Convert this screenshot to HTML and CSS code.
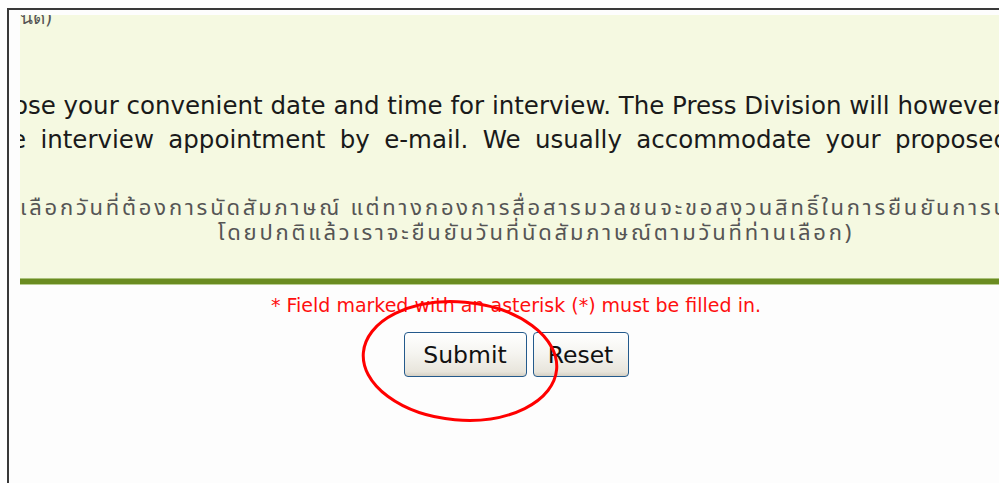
FILE: index.html
```html
<!DOCTYPE html>
<html lang="en">
<head>
<meta charset="utf-8">
<title>Interview request</title>
<link rel="stylesheet" href="styles.css">
</head>
<body>
<div class="frame">
  <div class="panel">
    <div class="panel-body">
      <p class="cut-top">นัด)</p>
      <div class="en">
        <div class="en-line en-first">ose your convenient date and time for interview. The Press Division will however reserve</div>
        <div class="en-line en-second">e interview appointment by e-mail. We usually accommodate your proposed</div>
      </div>
      <div class="th">
        <div class="th-line">(กรุณาเลือกวันที่ต้องการนัดสัมภาษณ์ แต่ทางกองการสื่อสารมวลชนจะขอสงวนสิทธิ์ในการยืนยันการนัดสัมภาษณ์</div>
        <div class="th-line">โดยปกติแล้วเราจะยืนยันวันที่นัดสัมภาษณ์ตามวันที่ท่านเลือก)</div>
      </div>
    </div>
    <div class="rule"></div>
  </div>
  <form class="actions" onsubmit="return false">
    <p class="note">* Field marked with an asterisk (*) must be filled in.</p>
    <div class="buttons">
      <button type="submit" class="btn btn-submit">Submit</button>
      <button type="reset" class="btn btn-reset">Reset</button>
    </div>
  </form>
  <svg class="circle-mark" width="240" height="140" viewBox="0 0 240 140" aria-hidden="true">
    <ellipse cx="110" cy="71" rx="97" ry="59" transform="rotate(5 110 71)" fill="none" stroke="#ff0000" stroke-width="3"/>
  </svg>
</div>
</body>
</html>
```

FILE: styles.css
```css
html, body {
  height: 100%;
}

body {
  margin: 8px 0 0 7px;
  overflow: hidden;
  background: #ffffff;
  font-family: "DejaVu Sans", Tahoma, sans-serif;
}

/* outer window frame, only top and left edges show */
.frame {
  position: relative;
  width: calc(100% + 30px);
  height: 100%;
  border-top: 2px solid #3a3a3a;
  border-left: 2px solid #3a3a3a;
  box-sizing: border-box;
  background: #fdfdfd;
}

/* pale green information panel */
.panel {
  margin: 5px 0 0 11px;
  background: #f5f9e1;
  overflow: hidden;
}

.panel-body {
  height: 263px;
  overflow: hidden;
}

.cut-top {
  margin: -11px 0 0 0;
  font-size: 19px;
  line-height: 26px;
  color: #555555;
}

.en {
  margin-top: 59px;
  color: #1a1a1a;
  font-size: 24.5px;
  line-height: 34px;
}

.en-line {
  white-space: nowrap;
}

.en-first {
  margin-left: -7px;
}

.en-second {
  width: 998px;
  margin-left: -9px;
  white-space: normal;
  text-align: justify;
  text-align-last: justify;
}

/* Thai lines are centred in a block wider than the panel */
.th {
  width: 2000px;
  margin: 39px 0 0 -484px;
  text-align: center;
  color: #555555;
  font-size: 22px;
  line-height: 25px;
  letter-spacing: 2.8px;
  font-family: Tahoma, "Noto Sans Thai", Loma, Garuda, "DejaVu Sans", sans-serif;
}

.th-line {
  white-space: nowrap;
}

.rule {
  height: 5px;
  background: #6b8c21;
  border-top: 1px solid #aac27a;
  border-bottom: 1px solid #b9cd92;
}

.actions {
  display: flex;
  flex-direction: column;
  align-items: center;
  margin-left: 12px;
  width: 990px;
}

.note {
  margin: 9px 0 0 0;
  color: #ff0f0f;
  font-size: 19px;
  line-height: 22px;
}

.buttons {
  display: flex;
  gap: 6px;
  margin-top: 16px;
}

.btn {
  height: 45px;
  padding: 0;
  border: 1px solid #245a8c;
  border-radius: 4px;
  background: linear-gradient(#ffffff 0%, #f6f5f1 45%, #e8e5dc 90%, #d5d0c4 100%);
  color: #111111;
  font-family: "DejaVu Sans", Tahoma, sans-serif;
  font-size: 23.5px;
}

.btn-submit {
  width: 123px;
}

.btn-reset {
  width: 96px;
}

/* hand-drawn red ring around the submit button */
.circle-mark {
  position: absolute;
  left: 341px;
  top: 280px;
  pointer-events: none;
}
```
